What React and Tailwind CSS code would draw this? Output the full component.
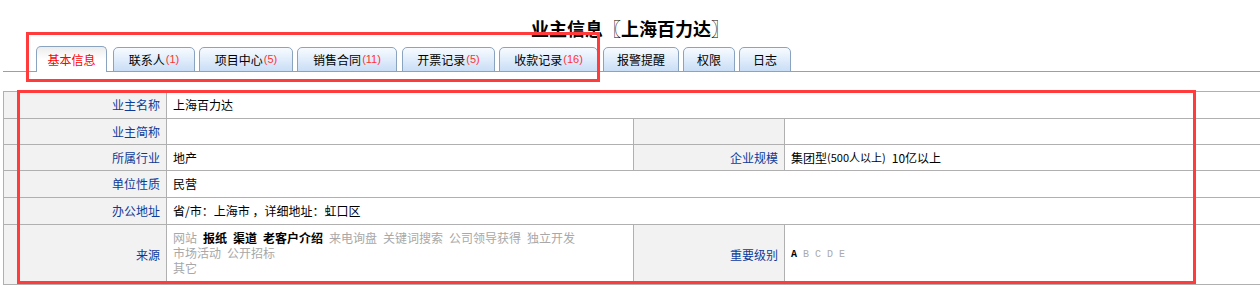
import React from "react";

const font = { fontFamily: '"Noto Sans CJK SC", "Liberation Sans", sans-serif' };

const tabs = [
  { label: "基本信息", w: "w-[71px] mr-[2px]", active: true },
  { label: "联系人", n: 1, w: "w-[82px]" },
  { label: "项目中心", n: 5, w: "w-[94px]" },
  { label: "销售合同", n: 11, w: "w-[100px] mr-[1px]" },
  { label: "开票记录", n: 5, w: "w-[93px]" },
  { label: "收款记录", n: 16, w: "w-[99px] mr-[1px]" },
  { label: "报警提醒", w: "w-[76px]" },
  { label: "权限", w: "w-[52px]" },
  { label: "日志", w: "w-[52px]" },
];

// 来源选项，选中的加粗
const sources = [
  [
    ["网站", false],
    ["报纸", true],
    ["渠道", true],
    ["老客户介绍", true],
    ["来电询盘", false],
    ["关键词搜索", false],
    ["公司领导获得", false],
    ["独立开发", false],
  ],
  [
    ["市场活动", false],
    ["公开招标", false],
  ],
  [["其它", false]],
];

const Label = ({ children, className = "" }) => (
  <div
    className={`flex items-center justify-end pr-[6px] bg-[#f2f2f2] border-r border-b border-[#b0b0b0] text-[#0d3a99] ${className}`}
  >
    {children}
  </div>
);

const Value = ({ children, className = "" }) => (
  <div
    className={`flex items-center pl-[6px] border-r border-b border-[#b0b0b0] text-black ${className}`}
  >
    {children}
  </div>
);

const App = () => {
  return (
    <div className="relative w-[1260px] h-[295px] overflow-hidden bg-white text-[12px]" style={font}>
      {/* 标题 */}
      <h1 className="pt-[18px] text-center text-[18px] leading-[20px] font-bold text-black">
        业主信息〖上海百力达〗
      </h1>

      {/* 标签页 */}
      <div className="mt-[8px] ml-[3px] flex items-end gap-[4px] pl-[33px] h-[26px] border-b border-[#8aa4c0]">
        {tabs.map((t) =>
          t.active ? (
            <div
              key={t.label}
              className={`${t.w} h-[26px] -mb-px flex items-center justify-center rounded-t-[5px] border border-b-0 border-[#8aa4c0] bg-linear-to-b from-[#ececec] via-white to-white text-[#ff0000]`}
            >
              {t.label}
            </div>
          ) : (
            <div
              key={t.label}
              className={`${t.w} h-[25px] -mb-px flex items-center justify-center rounded-t-[5px] border border-[#8aa4c0] bg-linear-to-b from-[#f7fbff] to-[#c9def6] text-black`}
            >
              {t.label}
              {t.n !== undefined && (
                <span className="ml-[1px] text-[11px] text-[#ff3333]" style={{ fontFamily: '"Liberation Sans", sans-serif' }}>
                  ({t.n})
                </span>
              )}
            </div>
          )
        )}
      </div>

      {/* 基本信息表 */}
      <div className="mt-[19px] ml-[3px] w-[1270px] grid grid-cols-[163px_467px_151px_1fr] border-t border-l border-[#b0b0b0]">
        <Label className="h-[27px]">业主名称</Label>
        <Value className="h-[27px] col-span-3">上海百力达</Value>

        <Label className="h-[26px]">业主简称</Label>
        <Value className="h-[26px]"></Value>
        <Label className="h-[26px]"></Label>
        <Value className="h-[26px]"></Value>

        <Label className="h-[26px]">所属行业</Label>
        <Value className="h-[26px]">地产</Value>
        <Label className="h-[26px]">企业规模</Label>
        <Value className="h-[26px]">
          集团型<span className="text-[11px]">(500人以上)</span>
          <span className="ml-[6px]">10亿以上</span>
        </Value>

        <Label className="h-[27px]">单位性质</Label>
        <Value className="h-[27px] col-span-3">民营</Value>

        <Label className="h-[27px]">办公地址</Label>
        <Value className="h-[27px] col-span-3">省/市：上海市 ，详细地址：虹口区</Value>

        <Label className="h-[60px]">来源</Label>
        <div className="h-[60px] pl-[6px] pt-[5px] leading-[15px] border-r border-b border-[#b0b0b0] text-[#a8a8a8]">
          {sources.map((line, i) => (
            <div key={i} className="flex gap-[6px]">
              {line.map(([name, on]) =>
                on ? (
                  <b key={name} className="text-black">
                    {name}
                  </b>
                ) : (
                  <span key={name}>{name}</span>
                )
              )}
            </div>
          ))}
        </div>
        <Label className="h-[60px]">重要级别</Label>
        <Value className="h-[60px] text-[10px]">
          <span className="flex gap-[6px]" style={{ fontFamily: '"Liberation Mono", monospace' }}>
            <b className="text-black">A</b>
            <span className="text-[#aaaaaa]">B</span>
            <span className="text-[#aaaaaa]">C</span>
            <span className="text-[#aaaaaa]">D</span>
            <span className="text-[#aaaaaa]">E</span>
          </span>
        </Value>
      </div>

      {/* 标注框 */}
      <div className="absolute left-[26px] top-[32px] w-[574px] h-[50px] border-[3px] border-[#ff3b3b]" />
      <div className="absolute left-[17px] top-[90px] w-[1179px] h-[194px] border-[3px] border-[#ff3b3b]" />
    </div>
  );
};

export default App;
